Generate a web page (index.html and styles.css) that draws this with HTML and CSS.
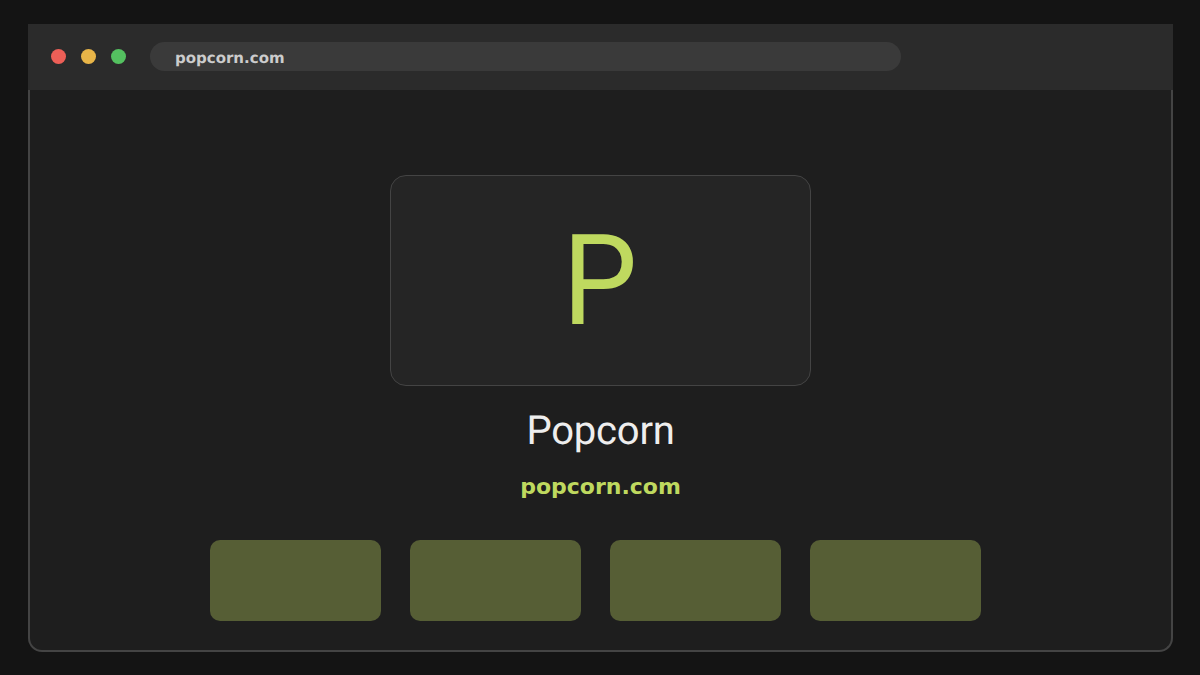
FILE: index.html
```html
<!DOCTYPE html>
<html>
<head>
    <title>Popcorn</title>
    <link rel="stylesheet" href="styles.css">
</head>
<body>
    <div class="window">
        <div class="topBar">
            <div class="dots">
                <span class="dot red"></span>
                <span class="dot amber"></span>
                <span class="dot green"></span>
            </div>
            <div class="addressBar">popcorn.com</div>
        </div>
        <div class="content">
            <div class="logoCard">
                <span class="logoLetter">P</span>
            </div>
            <h1 class="siteName">Popcorn</h1>
            <p class="siteUrl">popcorn.com</p>
            <div class="tiles">
                <div class="tile"></div>
                <div class="tile"></div>
                <div class="tile"></div>
                <div class="tile"></div>
            </div>
        </div>
    </div>
</body>
</html>
```

FILE: styles.css
```css
html, body{
    height: 100%;
}

body{
    display: flex;
    box-sizing: border-box;
    height: 675px;
    margin: 0px;
    padding: 24px 27px 23px 28px;
    background-color: #141414;
    overflow: hidden;
}

.window{
    display: flex;
    flex-direction: column;
    box-sizing: border-box;
    width: 1145px;
    height: 628px;
    background-color: #1e1e1e;
    border: 2px solid #444444;
    border-top: none;
    border-radius: 0px 0px 14px 14px;
}

.topBar{
    display: flex;
    align-items: center;
    flex-shrink: 0;
    box-sizing: border-box;
    height: 66px;
    margin: 0px -2px;
    padding: 0px 0px 2px 23px;
    background-color: #2b2b2b;
}

.dots{
    display: flex;
    gap: 15px;
    margin-right: 24px;
}

.dot{
    width: 15px;
    height: 15px;
    border-radius: 50%;
}

.red{
    background-color: #ed5f57;
}

.amber{
    background-color: #e8b548;
}

.green{
    background-color: #54c160;
}

.addressBar{
    box-sizing: border-box;
    width: 751px;
    height: 29px;
    padding-left: 25px;
    background-color: #3a3a3a;
    border-radius: 15px;
    color: #cccccc;
    font-family: "DejaVu Sans", sans-serif;
    font-size: 15px;
    font-weight: bold;
    line-height: 32px;
    text-rendering: geometricPrecision;
}

.content{
    display: flex;
    flex-direction: column;
    align-items: center;
    padding-top: 85px;
}

.logoCard{
    display: flex;
    justify-content: center;
    align-items: center;
    box-sizing: border-box;
    width: 421px;
    height: 211px;
    background-color: #252525;
    border: 1px solid #444444;
    border-radius: 16px;
}

.logoLetter{
    margin-right: 2px;
    color: #bfd95f;
    font-family: "Roboto", sans-serif;
    font-size: 126px;
    line-height: 1;
    transform: scaleX(0.94);
}

.siteName{
    margin: 20px 0px 0px;
    color: #eeeeee;
    font-family: "Roboto", sans-serif;
    font-size: 40px;
    font-weight: 400;
    letter-spacing: -0.2px;
    line-height: 50px;
    text-rendering: geometricPrecision;
}

.siteUrl{
    margin: 17px 0px 0px;
    color: #bfd95f;
    font-family: "DejaVu Sans", sans-serif;
    font-size: 22px;
    font-weight: bold;
    line-height: 27px;
}

.tiles{
    display: flex;
    gap: 29px;
    margin-top: 40px;
    margin-right: 10px;
}

.tile{
    width: 171px;
    height: 81px;
    background-color: #565e35;
    border-radius: 10px;
}
```
